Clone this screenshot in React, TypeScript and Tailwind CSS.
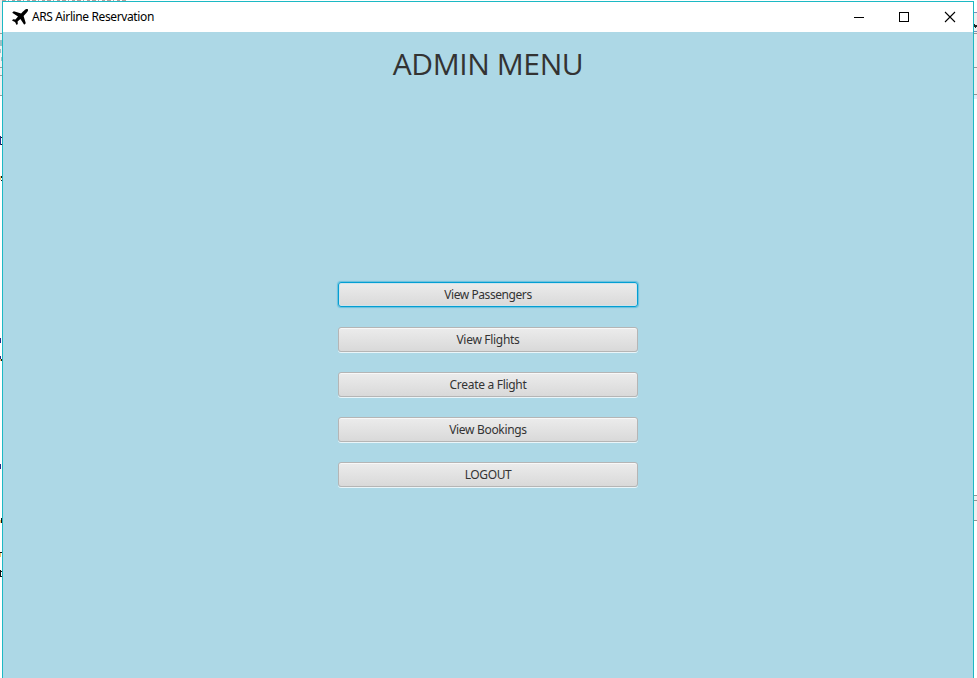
import React from "react";

const items = [
  { label: "View Passengers", spacing: "tracking-[-0.43px]" },
  { label: "View Flights", spacing: "tracking-[-0.3px]" },
  { label: "Create a Flight", spacing: "tracking-[-0.3px]" },
  { label: "View Bookings", spacing: "tracking-[-0.32px]" },
  { label: "LOGOUT", spacing: "tracking-[-0.4px]" },
];

function MenuButton({ label, spacing, focused }: { label: string; spacing: string; focused: boolean }) {
  const frame = focused
    ? "border-[#039ed3] shadow-[0_0_1px_1px_rgba(3,158,211,0.4),inset_0_0_0_1px_rgba(205,227,235,0.9)]"
    : "border-[#b5b5b5] shadow-[0_1px_0_rgba(255,255,255,0.75),inset_0_1px_0_#f8f8f8]";
  return (
    <button
      className={`flex h-[25px] w-[300px] items-center justify-center rounded-[3px] border bg-linear-to-b from-[#ececec] to-[#d9d9d9] pt-px text-[12px] leading-none text-[#333] outline-none ${spacing} ${frame}`}
    >
      {label}
    </button>
  );
}

function PlaneIcon() {
  return (
    <svg className="h-[18px] w-[18px] shrink-0" viewBox="0 0 18 18" fill="black">
      <path d="M15.6 1C16.7.8 17.3 1.5 17 2.6C16.8 3.5 15.8 4.6 14.4 6L12.6 7.9L14.8 15.2L13.2 16.8L9.4 11L6.6 13.6L6.8 15.9L5.6 17L4 14L1 12.4L2.1 11.2L4.4 11.4L7 8.6L1.2 4.8L2.8 3.2L10.1 5.4L12 3.6C13.4 2.2 14.6 1.2 15.6 1Z" />
    </svg>
  );
}

function TitleBar() {
  return (
    <header className="flex h-[30px] shrink-0 items-center bg-white pl-[8px] text-black">
      <PlaneIcon />
      <span className="ml-[3px] text-[12px] leading-none tracking-[-0.38px] whitespace-nowrap">ARS Airline Reservation</span>
      <svg className="ml-auto mr-[16px] h-[12px] w-[104px]" viewBox="0 0 104 12" fill="none" stroke="black" shapeRendering="crispEdges">
        <path d="M1 6.5H11" />
        <rect x="46.5" y="1.5" width="9" height="9" />
        <path d="M92 1L102 11M102 1L92 11" shapeRendering="auto" strokeWidth="1.1" />
      </svg>
    </header>
  );
}

// Sliver of the window behind, along the left edge.
function LeftSliver() {
  return (
    <svg className="h-full w-[2px] shrink-0" viewBox="0 0 2 678" shapeRendering="crispEdges">
      <path fill="#f1f1f1" d="M0 0h2v95H0z" />
      <path fill="#9a9a9a" d="M0 33h2v1H0zM0 67h2v1H0zM0 75h2v1H0zM0 95h2v1H0z" />
      <path fill="#9fbfc4" d="M0 40h2v6H0zM0 49h1v4H0zM1 57h1v4H1z" />
      <path fill="#252b84" d="M0 136h1v9H0zM0 338h1v5H0zM0 356h1v4H0zM0 464h1v5H0z" />
      <path fill="#111" d="M1 137h1v1H1zM1 144h1v1H1zM1 176h1v2H1zM1 180h1v1H1zM1 359h1v2H1zM1 518h1v5H1zM0 552h2v1H0zM0 570h1v7H0zM1 571h1v1H1zM1 576h1v1H1z" />
      <path fill="#efc46b" d="M0 176h1v4H0zM0 359h1v2H0zM0 520h1v3H0zM0 553h1v4H0z" />
    </svg>
  );
}

// Sliver of the window behind, along the right edge.
function RightSliver() {
  return (
    <svg className="h-full w-[3px] shrink-0" viewBox="0 0 3 678" shapeRendering="crispEdges">
      <path fill="#efefef" d="M0 13h3v81H0zM0 496h3v24H0z" />
      <path fill="#7890bb" d="M0 12h3v1H0zM0 31h3v1H0z" />
      <path fill="#969696" d="M0 33h3v1H0zM0 67h3v1H0zM0 94h3v1H0zM0 495h3v1H0zM0 500h3v1H0zM0 520h3v1H0z" />
      <path fill="#e3edf7" d="M0 95h3v4H0z" />
      <path fill="#222" d="M0 24h1v3H0zM1 25h1v3H1zM2 25h1v2H2z" />
    </svg>
  );
}

export default function App() {
  return (
    <div className="flex h-[678px] w-[977px] overflow-hidden bg-white font-['Noto_Sans','Open_Sans',sans-serif]">
      <LeftSliver />
      <div className="flex h-full w-[972px] flex-col">
        <svg className="h-px w-full shrink-0" viewBox="0 0 972 1" shapeRendering="crispEdges">
          <path stroke="#b9a09c" strokeDasharray="4 2 1 3 3 2" d="M0 .5H126" />
        </svg>
        <main className="flex min-h-0 flex-1 flex-col border border-b-0 border-[#1cb9c4] bg-[#add8e6]">
          <TitleBar />
          <h1 className="mt-[16px] text-center font-['Open_Sans','Noto_Sans',sans-serif] text-[30px] leading-[32px] font-normal tracking-[-0.4px] text-[#333]">ADMIN MENU</h1>
          <nav className="mt-[202px] flex flex-col items-center gap-[20px]">
            {items.map((item, i) => (
              <MenuButton key={item.label} label={item.label} spacing={item.spacing} focused={i === 0} />
            ))}
          </nav>
        </main>
      </div>
      <RightSliver />
    </div>
  );
}
